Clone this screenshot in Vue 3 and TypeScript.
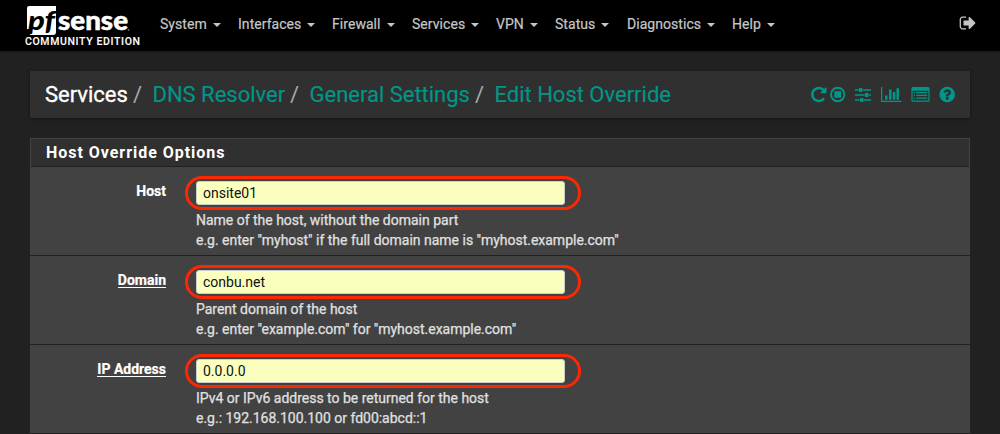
<script setup lang="ts">
interface MenuItem { label: string; key: string }
interface Field { label: string; underlined: boolean; value: string; help: string[] }

const menu: MenuItem[] = [
  { label: 'System', key: 'system' },
  { label: 'Interfaces', key: 'interfaces' },
  { label: 'Firewall', key: 'firewall' },
  { label: 'Services', key: 'services' },
  { label: 'VPN', key: 'vpn' },
  { label: 'Status', key: 'status' },
  { label: 'Diagnostics', key: 'diagnostics' },
  { label: 'Help', key: 'support' },
]

const crumbs: string[] = ['DNS Resolver', 'General Settings', 'Edit Host Override']

const fields: Field[] = [
  {
    label: 'Host',
    underlined: false,
    value: 'onsite01',
    help: ['Name of the host, without the domain part', 'e.g. enter "myhost" if the full domain name is "myhost.example.com"'],
  },
  {
    label: 'Domain',
    underlined: true,
    value: 'conbu.net',
    help: ['Parent domain of the host', 'e.g. enter "example.com" for "myhost.example.com"'],
  },
  {
    label: 'IP Address',
    underlined: true,
    value: '0.0.0.0',
    help: ['IPv4 or IPv6 address to be returned for the host', 'e.g.: 192.168.100.100 or fd00:abcd::1'],
  },
]
</script>

<template>
  <div class="page">
    <header class="navbar">
      <svg class="logo" width="125" height="51" viewBox="0 0 125 51">
        <path d="M4 6H31V32Q31 35 28 35H5L7 29H2V8Q2 6 4 6Z" fill="#fff" />
        <text class="logo-pf" x="3" y="29.500" textLength="27" lengthAdjust="spacingAndGlyphs">pf</text>
        <text class="logo-sense" x="33" y="29.500" textLength="70" lengthAdjust="spacingAndGlyphs">sense</text>
        <circle cx="103.500" cy="30" r="0.800" fill="#999" />
        <text class="logo-edition" x="0" y="45" textLength="115">COMMUNITY EDITION</text>
      </svg>
      <nav class="menu">
        <a v-for="item in menu" :key="item.key" class="menu-item" :class="item.key">
          <span>{{ item.label }}</span>
          <i class="caret"></i>
        </a>
      </nav>
      <svg class="sign-out" width="18" height="18" viewBox="0 0 1792 1792">
        <path d="M704 1440q0 4 1 20t.5 26.500-3 23.500-10 19.500-20.500 6.500h-320q-119 0-203.500-84.500t-84.500-203.500v-704q0-119 84.500-203.500t203.500-84.500h320q13 0 22.500 9.500t9.500 22.500q0 4 1 20t.5 26.500-3 23.500-10 19.500-20.500 6.500h-320q-66 0-113 47t-47 113v704q0 66 47 113t113 47h312l11.500 1 11.500 3 8 5.500 7 9 2 13.500zm928-544q0 26-19 45l-544 544q-19 19-45 19t-45-19-19-45v-288h-448q-26 0-45-19t-19-45v-384q0-26 19-45t45-19h448v-288q0-26 19-45t45-19 45 19l544 544q19 19 19 45z" />
      </svg>
    </header>

    <div class="breadcrumb">
      <div class="trail">
        <span class="root">Services</span>
        <template v-for="(crumb, i) in crumbs" :key="crumb">
          <span class="slash">/</span>
          <a class="crumb" :class="'crumb-' + i">{{ crumb }}</a>
        </template>
      </div>
      <svg class="tools" width="150" height="20" viewBox="0 0 150 20">
        <g transform="translate(-0.200 0.500) scale(0.01005)">
          <path d="M1664 256v448q0 26-19 45t-45 19h-448q-42 0-59-40-17-39 14-69l138-138q-148-137-349-137-104 0-198.500 40.500t-163.500 109.500-109.500 163.500-40.500 198.500 40.500 198.500 109.500 163.500 163.500 109.500 198.500 40.500q119 0 225-52t179-147q7-10 23-12 15 0 25 9l137 138q9 8 9.500 20.500t-7.500 22.500q-109 132-264 204.500t-327 72.500q-156 0-298-61t-245-164-164-245-61-298 61-298 164-245 245-164 298-61q147 0 284.500 55.500t244.500 156.500l130-129q29-31 70-14 39 17 39 59z" />
        </g>
        <circle cx="27.700" cy="9.500" r="6.700" fill="none" stroke="#009688" stroke-width="2" />
        <rect x="24.300" y="6.200" width="6.800" height="6.600" rx="0.500" />
        <path d="M45 4.200h3.500v1.600H45zM53 4.200h8v1.600h-8zM45 9.200h9.500v1.600H45zM59 9.200h2v1.600h-2zM45 14.200h4.500v1.600H45zM54 14.200h7v1.600h-7z" />
        <rect x="48.800" y="3" width="3.600" height="4" rx="0.800" />
        <rect x="54.900" y="8" width="3.600" height="4" rx="0.800" />
        <rect x="50" y="13" width="3.600" height="4" rx="0.800" />
        <path d="M71 2h1.300v13.800H91.500V17H71zM75 10.500h2.500v4.300H75zM79 4.500h2.500v10.300H79zM82.800 7h2.500v7.800h-2.500zM86.500 3.200H89v11.600h-2.500z" />
        <path fill-rule="evenodd" d="M103 2h15q1.600 0 1.600 1.600v11.600q0 1.600-1.600 1.600h-15q-1.600 0-1.600-1.600V3.600Q101.400 2 103 2zM103 5.800q-.4 0-.4.4v9q0 .4.4.4h15q.4 0 .4-.4v-9q0-.4-.4-.4z" />
        <path d="M103.800 7h1.300v1.300h-1.300zM106.300 7h10.900v1.300h-10.900zM103.800 9.700h1.300V11h-1.300zM106.300 9.700h10.900V11h-10.900zM103.800 12.400h1.300v1.300h-1.300zM106.300 12.400h10.900v1.300h-10.900z" />
        <g transform="translate(128.200 0.500) scale(0.01005)">
          <path d="M1024 1376v-192q0-14-9-23t-23-9h-192q-14 0-23 9t-9 23v192q0 14 9 23t23 9h192q14 0 23-9t9-23zm256-672q0-88-55.500-163t-138.500-116-170-41q-243 0-371 213-15 24 8 42l132 100q7 6 19 6 16 0 25-12 53-68 86-92 34-24 86-24 48 0 85.500 26t37.500 59q0 38-20 61t-68 45q-63 28-115.500 86.500t-52.500 125.500v36q0 14 9 23t23 9h192q14 0 23-9t9-23q0-19 21.500-49.500t54.500-49.500q32-18 49-28.500t46-35 44.500-48 28-60.500 12.500-81zm384 192q0 209-103 385.500t-279.500 279.500-385.500 103-385.500-103-279.500-279.500-103-385.500 103-385.500 279.500-279.500 385.500-103 385.500 103 279.500 279.500 103 385.500z" />
        </g>
      </svg>
    </div>

    <section class="panel">
      <h2 class="panel-title">Host Override Options</h2>
      <div v-for="field in fields" :key="field.label" class="row">
        <div class="label"><span :class="{ underlined: field.underlined }">{{ field.label }}</span></div>
        <div class="content">
          <div class="ring"><input class="input" type="text" :value="field.value" /></div>
          <p v-for="line in field.help" :key="line" class="hint">{{ line }}</p>
        </div>
      </div>
    </section>
  </div>
</template>

<style>
html, body { margin: 0; background: #212121; overflow: hidden; }
</style>

<style scoped>
.page { height: 434px; overflow: hidden; background: #212121; font-family: Roboto, "Liberation Sans", sans-serif; color: #e0e0e0; }
.navbar { display: flex; height: 51px; background: #000; box-shadow: 0 1px 2px rgba(0, 0, 0, 0.3); }
.logo { flex: none; margin-left: 25px; }
.logo-pf { font: italic 900 27px Lato, sans-serif; fill: #000; }
.logo-sense { font: 900 26px Lato, sans-serif; fill: #fff; stroke: #fff; stroke-width: 0.500px; }
.logo-edition { font: 500 10.500px Roboto, sans-serif; fill: #fff; stroke: #fff; stroke-width: 0.100px; }
.menu { display: flex; flex: 1; margin-left: 10px; }
.menu-item { display: flex; box-sizing: border-box; height: 48px; align-items: center; gap: 6px; font-size: 14px; line-height: 20px; letter-spacing: 0.050px; color: #c6c6c6; white-space: nowrap; -webkit-text-stroke: 0.200px #c6c6c6; }
.system { width: 78px; }
.interfaces { width: 94px; }
.firewall { width: 80px; }
.services { width: 84px; }
.vpn { width: 59px; }
.status { width: 72px; }
.diagnostics { width: 105px; }
.caret { width: 0; height: 0; margin-top: 2px; border: 4px solid transparent; border-top-color: #c6c6c6; border-bottom: 0; }
.sign-out { flex: none; margin: 14px 23.500px 0 0; fill: #c6c6c6; }
.breadcrumb { display: flex; box-sizing: border-box; height: 47px; margin: 20px 30px 0; padding: 0 12px 0 15px; align-items: center; justify-content: space-between; background: #303030; box-shadow: 0 1px 3px rgba(0, 0, 0, 0.4); }
.trail { display: flex; font-size: 22px; line-height: 30px; letter-spacing: -0.010px; white-space: nowrap; }
.root { width: 88px; color: #fff; -webkit-text-stroke: 0.350px #fff; }
.slash { width: 19.500px; color: #aaa; }
.crumb { color: #009688; -webkit-text-stroke: 0.150px #009688; }
.crumb-0 { width: 137.500px; }
.crumb-1 { width: 165.500px; }
.tools { flex: none; fill: #009688; margin: 1px -2px 0 0; }
.panel { margin: 20px 30px 0; border: 1px solid #424242; border-bottom: 0; background: #424242; }
.panel-title { box-sizing: border-box; height: 28px; margin: 0; padding-left: 15px; border-bottom: 1px solid #212121; background: #303030; color: #fff; font-size: 16px; font-weight: 700; line-height: 27px; letter-spacing: 0.970px; }
.row { display: flex; box-sizing: border-box; height: 89px; margin: 0 -1px; padding-top: 9px; border-bottom: 1px solid #212121; }
.label { width: 136px; margin-right: 19px; padding-top: 5px; text-align: right; color: #fff; font-size: 14px; font-weight: 700; line-height: 20px; -webkit-text-stroke: 0.200px #fff; }
.underlined { display: inline-block; height: 16px; line-height: 18px; border-bottom: 1px solid #fff; }
.ring { display: flex; box-sizing: border-box; width: 396px; height: 34px; padding: 2px 8px; border: 3px solid #fc2803; border-radius: 17px; }
.input { box-sizing: border-box; width: 369px; height: 24px; margin: 0; padding: 0 6px; border: 1px solid #ccc; border-radius: 3px; outline: none; background: #faffbd; color: #111; font: 14px/20px Roboto, sans-serif; letter-spacing: 0; }
.hint { margin: 0 0 0 11px; color: #e0e0e0; font-size: 14px; line-height: 20px; letter-spacing: -0.010px; white-space: nowrap; -webkit-text-stroke: 0.250px #e0e0e0; }
</style>
